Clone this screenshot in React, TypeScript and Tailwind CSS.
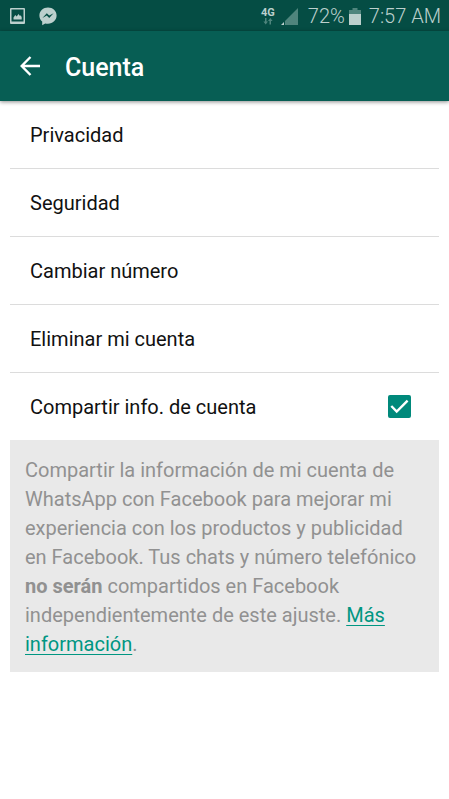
import { useState } from "react";

const ITEMS = ["Privacidad", "Seguridad", "Cambiar número", "Eliminar mi cuenta"];

function StatusBar() {
  return (
    <div className="flex h-[31px] items-center justify-between bg-[#054d44] pl-2.5 pr-2 pt-px text-[#bcd0cd]">
      <div className="flex items-center gap-3.5">
        <svg width="15" height="16" viewBox="0 0 15 16" aria-hidden="true">
          <path
            fill="currentColor"
            fillRule="evenodd"
            d="M1 0h13a1 1 0 0 1 1 1v14a1 1 0 0 1-1 1H1a1 1 0 0 1-1-1V1a1 1 0 0 1 1-1zM1.500 1.500v12h12v-12zM3.500 11.500V9.500l1.800-2.500 1.400 1.500L8.500 6l1.500 2 .8-.8.900 2v2.300z"
          />
        </svg>
        <svg width="18" height="19" viewBox="0 0 18 19" aria-hidden="true">
          <path
            fill="currentColor"
            d="M9 .5C4.200.5.4 4 .4 8.500c0 2.600 1.100 4.700 2.800 6.100v3.600l3-1.800c.9.200 1.800.300 2.800.300 4.800 0 8.600-3.600 8.600-8.200S13.800.5 9 .5z"
          />
          <path fill="#054d44" d="M3.400 11 7.800 6.200l2.400 2.300 4.400-2.300-4.400 4.700-2.400-2.300z" />
        </svg>
      </div>

      <div className="flex items-center">
        <div className="flex flex-col items-center">
          <span className="text-[11px] font-bold leading-[10px]">4G</span>
          <svg width="10" height="7" viewBox="0 0 10 7" aria-hidden="true" className="text-[#4f857d]">
            <path fill="currentColor" d="M2 0h1.500v3.500H5L2.700 6.500.4 3.500H2zM6.500 6.500V3H5L7.300 0l2.300 3H8v3.500z" />
          </svg>
        </div>
        <svg width="17" height="17" viewBox="0 0 17 17" aria-hidden="true" className="ml-1.5">
          <path fill="#4f857d" d="M17 0v17H4v-4z" />
          <path fill="currentColor" d="M3 14v3H0z" />
        </svg>
        <span className="ml-2.5 text-[20px] font-light leading-6">72%</span>
        <svg width="12" height="17" viewBox="0 0 12 17" aria-hidden="true" className="ml-1">
          <path fill="#4f857d" d="M3.500 0h5v2H12v4H0V2h3.500z" />
          <path fill="currentColor" d="M0 6h12v11H0z" />
        </svg>
        <span className="ml-2 text-[20px] font-light leading-6">7:57 AM</span>
      </div>
    </div>
  );
}

export default function App() {
  const [shareInfo, setShareInfo] = useState(true);

  return (
    <div className="min-h-screen bg-white font-['Roboto',sans-serif] text-[20px] text-[#111111]">
      <StatusBar />

      <header className="flex h-[70px] items-center gap-6 bg-[#075e54] pl-5 text-white shadow-[0_1px_4px_rgba(0,0,0,0.45)]">
        <button type="button" aria-label="Atrás" className="shrink-0">
          <svg width="21" height="20" viewBox="0 0 21 20" fill="none" stroke="currentColor" strokeWidth="2.400" aria-hidden="true">
            <path d="M20 10H2M10.500 1 1.700 10l8.800 9" />
          </svg>
        </button>
        <h1 className="pt-1 text-[25px] font-medium leading-8">Cuenta</h1>
      </header>

      <main className="px-2.5">
        <ul>
          {ITEMS.map((item) => (
            <li key={item} className="border-b border-[#dcdcdc]">
              <button type="button" className="flex h-[67px] w-full items-center px-5 text-left">
                {item}
              </button>
            </li>
          ))}
        </ul>

        <label className="flex h-[67px] items-center justify-between pl-5 pr-7">
          Compartir info. de cuenta
          <span className="grid">
            <input
              type="checkbox"
              checked={shareInfo}
              onChange={(e) => setShareInfo(e.target.checked)}
              className="peer col-start-1 row-start-1 size-[23px] appearance-none rounded-xs border-2 border-[#757575] checked:border-[#00897b] checked:bg-[#00897b]"
            />
            <svg
              viewBox="0 0 23 23"
              fill="none"
              stroke="white"
              strokeWidth="2.400"
              aria-hidden="true"
              className="pointer-events-none invisible col-start-1 row-start-1 size-[23px] peer-checked:visible"
            >
              <path d="m3.300 11 5.400 5.500L19.600 5.600" />
            </svg>
          </span>
        </label>

        <p className="bg-[#e9e9e9] px-[15px] pb-[13px] pt-4 leading-[29px] text-[#919191]">
          Compartir la información de mi cuenta de WhatsApp con Facebook para mejorar mi experiencia con los
          productos y publicidad en Facebook. Tus chats y número telefónico{" "}
          <strong className="font-bold">no serán</strong> compartidos en Facebook independientemente de este
          ajuste.{" "}
          <a href="#mas-informacion" className="text-[#009682] underline decoration-1 underline-offset-3">
            Más información
          </a>
          .
        </p>
      </main>
    </div>
  );
}
